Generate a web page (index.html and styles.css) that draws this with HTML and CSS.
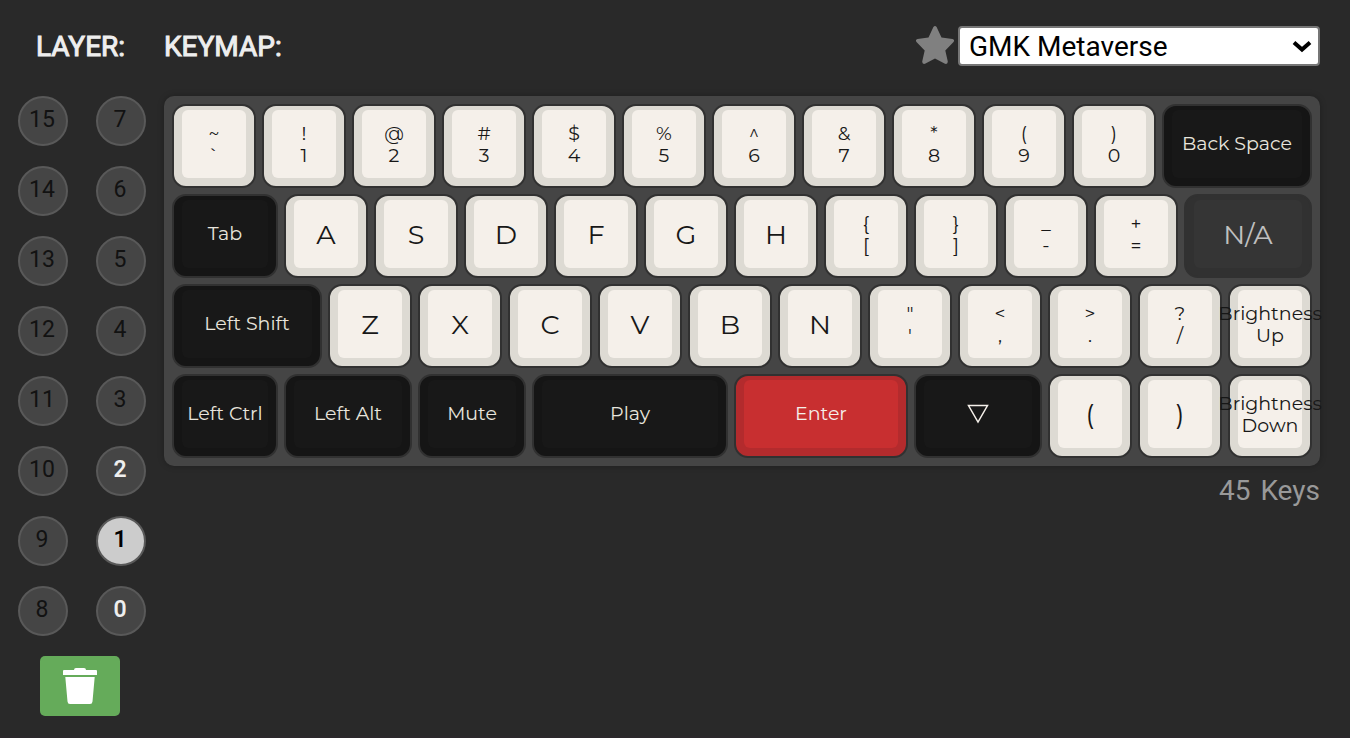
FILE: index.html
```html
<!DOCTYPE html>
<html lang="en">
<head>
<meta charset="utf-8">
<title>Keymap</title>
<link rel="stylesheet" href="styles.css">
</head>
<body>
<main class="app">
  <aside class="layers">
    <h2 class="heading layers-heading">LAYER:</h2>
    <div class="layer-grid">
      <button class="layer">15</button><button class="layer">7</button>
      <button class="layer">14</button><button class="layer">6</button>
      <button class="layer">13</button><button class="layer">5</button>
      <button class="layer">12</button><button class="layer">4</button>
      <button class="layer">11</button><button class="layer">3</button>
      <button class="layer">10</button><button class="layer used">2</button>
      <button class="layer">9</button><button class="layer active">1</button>
      <button class="layer">8</button><button class="layer used">0</button>
    </div>
    <button class="clear" aria-label="Clear layer">
      <svg class="trash" viewBox="0 0 34 36" aria-hidden="true"><path d="M0 3Q0 2 1 2H11Q11 0 13 0H21Q23 0 23 2H33Q34 2 34 3V7H0ZM2.300 9H31.700L29.500 33.500Q29.300 36 27 36H7Q4.700 36 4.500 33.500Z"/></svg>
    </button>
  </aside>
  <section class="keymap">
    <header class="bar">
      <h2 class="heading">KEYMAP:</h2>
      <div class="theme">
        <button class="favorite" aria-label="Favorite">
          <svg class="star" viewBox="0 0 38 38" aria-hidden="true"><path d="M17.400 1Q19 -0.800 20.600 1L25.500 11.500L36.500 13Q39 13.800 37.500 16L29.300 24.500L31.800 35.500Q31.800 38.600 29 37.800L19 32.500L9 37.800Q6.200 38.600 6.200 35.500L8.700 24.500L0.500 16Q-1 13.800 1.500 13L12.500 11.500Z"/></svg>
        </button>
        <div class="select-wrap">
          <select class="select" aria-label="Keycap theme"><option>GMK Metaverse</option></select>
          <svg class="chevron" viewBox="0 0 20 13" aria-hidden="true"><path d="M2 2.500L10 9.500L18 2.500"/></svg>
        </div>
      </div>
    </header>
    <div class="keyboard">
      <div class="row row-1">
        <button class="key"><span class="face">~<br>`</span></button>
        <button class="key"><span class="face">!<br>1</span></button>
        <button class="key"><span class="face">@<br>2</span></button>
        <button class="key"><span class="face">#<br>3</span></button>
        <button class="key"><span class="face">$<br>4</span></button>
        <button class="key"><span class="face">%<br>5</span></button>
        <button class="key"><span class="face">^<br>6</span></button>
        <button class="key"><span class="face">&amp;<br>7</span></button>
        <button class="key"><span class="face">*<br>8</span></button>
        <button class="key"><span class="face">(<br>9</span></button>
        <button class="key"><span class="face">)<br>0</span></button>
        <button class="key mod"><span class="face">Back Space</span></button>
      </div>
      <div class="row row-2">
        <button class="key mod"><span class="face">Tab</span></button>
        <button class="key letter"><span class="face">A</span></button>
        <button class="key letter"><span class="face">S</span></button>
        <button class="key letter"><span class="face">D</span></button>
        <button class="key letter"><span class="face">F</span></button>
        <button class="key letter"><span class="face">G</span></button>
        <button class="key letter"><span class="face">H</span></button>
        <button class="key"><span class="face">{<br>[</span></button>
        <button class="key"><span class="face">}<br>]</span></button>
        <button class="key"><span class="face">_<br>-</span></button>
        <button class="key"><span class="face">+<br>=</span></button>
        <button class="key letter none"><span class="face">N/A</span></button>
      </div>
      <div class="row row-3">
        <button class="key mod"><span class="face">Left Shift</span></button>
        <button class="key letter"><span class="face">Z</span></button>
        <button class="key letter"><span class="face">X</span></button>
        <button class="key letter"><span class="face">C</span></button>
        <button class="key letter"><span class="face">V</span></button>
        <button class="key letter"><span class="face">B</span></button>
        <button class="key letter"><span class="face">N</span></button>
        <button class="key"><span class="face">"<br>'</span></button>
        <button class="key"><span class="face">&lt;<br>,</span></button>
        <button class="key"><span class="face">&gt;<br>.</span></button>
        <button class="key"><span class="face">?<br>/</span></button>
        <button class="key"><span class="face">Brightness<br>Up</span></button>
      </div>
      <div class="row row-4">
        <button class="key mod"><span class="face">Left Ctrl</span></button>
        <button class="key mod"><span class="face">Left Alt</span></button>
        <button class="key mod"><span class="face">Mute</span></button>
        <button class="key mod"><span class="face">Play</span></button>
        <button class="key accent"><span class="face">Enter</span></button>
        <button class="key mod" aria-label="Transparent"><span class="face"><svg class="triangle" viewBox="0 0 22 20" aria-hidden="true"><path d="M1.500 1.500H20.500L11 18Z"/></svg></span></button>
        <button class="key letter"><span class="face">(</span></button>
        <button class="key letter"><span class="face">)</span></button>
        <button class="key"><span class="face">Brightness<br>Down</span></button>
      </div>
    </div>
    <p class="count"><span>45</span><span>Keys</span></p>
  </section>
</main>
</body>
</html>
```
FILE: styles.css
```css
* { box-sizing: border-box; }

body {
  margin: 0;
  background: #292929;
  color: #eee;
  font-family: Roboto, sans-serif;
}

button {
  margin: 0;
  padding: 0;
  font-family: inherit;
  cursor: pointer;
}

.app {
  display: flex;
  gap: 18px;
  min-height: 100vh;
  padding: 26px 30px 20px 18px;
  border-bottom: 2px solid #2b282b;
}

.layers {
  display: flex;
  flex-direction: column;
  flex: none;
}

.heading {
  margin: 0;
  font-size: 28px;
  font-weight: 400;
  line-height: 42px;
  -webkit-text-stroke: 1px #eee;
}

.layers-heading { padding-left: 18px; }

.layer-grid {
  display: grid;
  grid-template-columns: 50px 50px;
  gap: 20px 28px;
  margin-top: 28px;
}

.layer {
  height: 50px;
  padding: 0 2px 4px 0;
  border: 2px solid #595959;
  border-radius: 50%;
  background: #454545;
  color: #121212;
  font-size: 23px;
}

.used { color: #eee; font-weight: 600; }
.active { background: #ccc; color: #000; font-weight: 600; }

.clear {
  display: flex;
  align-items: center;
  justify-content: center;
  width: 80px;
  height: 60px;
  margin: 20px 0 0 22px;
  border: 0;
  border-radius: 5px;
  background: #65ab5a;
}

.trash { width: 34px; height: 36px; fill: #fff; }

.keymap { flex: 1; min-width: 0; }

.bar { display: flex; justify-content: space-between; }

.theme { display: flex; align-items: flex-start; gap: 4px; }

.favorite { display: flex; border: 0; background: none; }

.star { width: 38px; height: 38px; fill: #808080; }

.select-wrap { position: relative; width: 362px; }

.select {
  width: 100%;
  height: 40px;
  padding: 2px 9px 0;
  appearance: none;
  border: 2px solid #767676;
  border-radius: 4px;
  background: #fff;
  color: #000;
  font-family: inherit;
  font-size: 28px;
  line-height: 34px;
}

.chevron {
  position: absolute;
  top: 14px;
  right: 8px;
  width: 20px;
  height: 13px;
  fill: none;
  stroke: #000;
  stroke-width: 4;
  pointer-events: none;
}

.keyboard {
  display: flex;
  flex-direction: column;
  gap: 6px;
  margin-top: 28px;
  padding: 8px;
  border-radius: 10px;
  background: #454545;
  box-shadow: 0 0 6px rgba(0, 0, 0, 0.25);
}

.row { display: grid; gap: 6px; }
.row-1 { grid-template-columns: repeat(11, minmax(0, 84fr)) minmax(0, 150fr); }
.row-2 { grid-template-columns: minmax(0, 106fr) repeat(10, minmax(0, 84fr)) minmax(0, 128fr); }
.row-3 { grid-template-columns: minmax(0, 150fr) repeat(11, minmax(0, 84fr)); }
.row-4 {
  grid-template-columns:
    minmax(0, 106fr) minmax(0, 128fr) minmax(0, 108fr) minmax(0, 196fr)
    minmax(0, 174fr) minmax(0, 128fr) repeat(3, minmax(0, 84fr));
}

.key {
  display: flex;
  height: 84px;
  padding: 4px 8px 8px;
  border: 2px solid #313131;
  border-radius: 14px;
  background: #dddad3;
  color: #171717;
  font-family: Montserrat, Inter, sans-serif;
  font-size: 19px;
  font-weight: 400;
  line-height: 22px;
}

.face {
  display: flex;
  flex: 1;
  align-items: center;
  justify-content: center;
  min-width: 0;
  height: 68px;
  padding-top: 2px;
  border-radius: 6px;
  background: #f5f0ea;
  text-align: center;
  white-space: nowrap;
}

.letter { font-size: 27px; }

.mod .face, .accent .face { padding-top: 0; }

.mod { background: #151515; color: #e8e5dd; }
.mod .face { background: #181818; }

.accent { background: #b32b2d; color: #f5f0ea; }
.accent .face { background: #c82f30; }

.none { background: #313131; color: #c0c0c0; }
.none .face { background: #353535; }

.triangle {
  width: 22px;
  height: 20px;
  fill: none;
  stroke: #f5f0ea;
  stroke-width: 1.500;
}

.count {
  display: flex;
  justify-content: flex-end;
  gap: 10px;
  margin: 8px 0 0;
  color: #999;
  font-size: 28px;
  line-height: 34px;
}
```
